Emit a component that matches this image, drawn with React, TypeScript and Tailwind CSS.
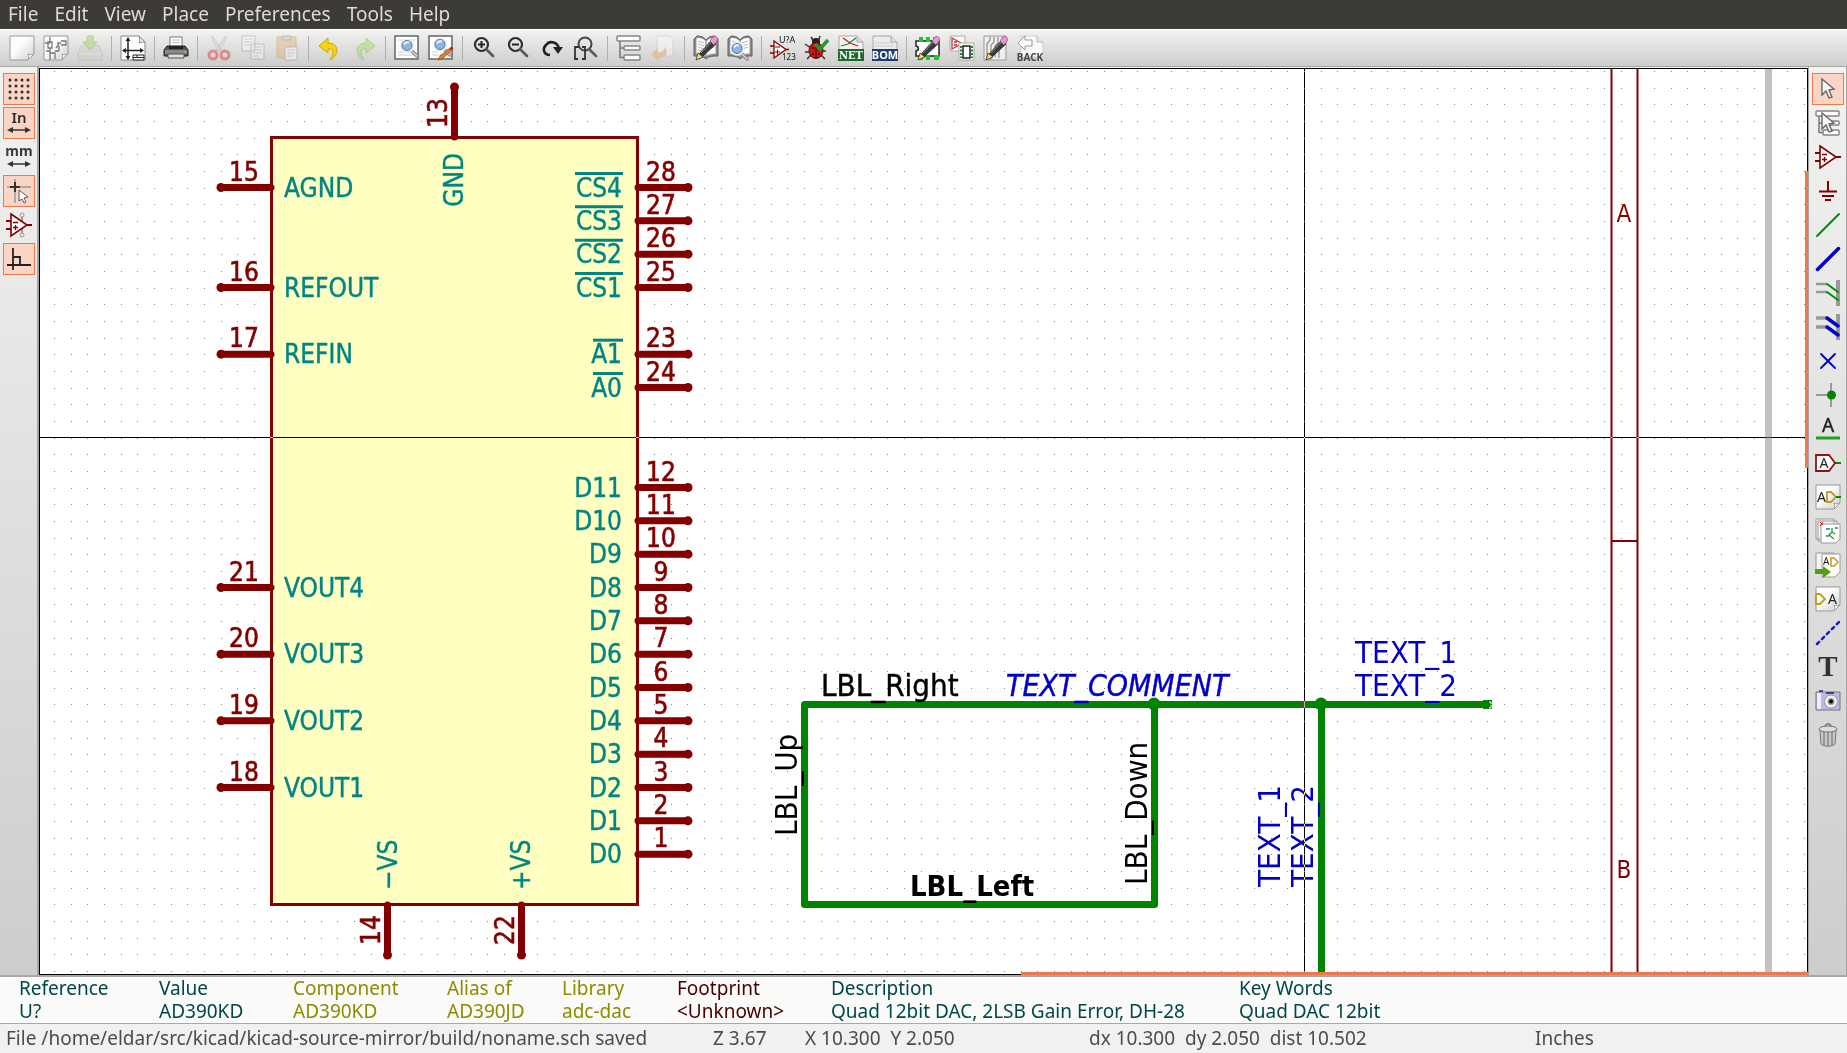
import type { ReactNode } from 'react';
import clsx from 'clsx';

type Tool = { name: string; icon: ReactNode; active?: boolean; disabled?: boolean };

const Icon = ({ children }: { children: ReactNode }) => (
  <svg viewBox="0 0 26 26" fill="none" className="size-[26px] shrink-0 overflow-visible" aria-hidden="true">
    {children}
  </svg>
);

const Page = () => (
  <>
    <path d="M1 1h24v18l-6 6H1z" fill="url(#paper)" stroke="#9a9a9a" />
    <path d="M25 19l-6 6c1-2 1-4 0-6 2 1 4 1 6 0z" fill="#fff" stroke="#9a9a9a" />
  </>
);

const Glass = ({ x = 0, y = 0 }: { x?: number; y?: number }) => (
  <g transform={`translate(${x} ${y})`}>
    <path d="M15 14l6 6" stroke="#8a8a8a" strokeWidth="3.5" strokeLinecap="round" />
    <path d="M15 14l6 6" stroke="#d0d0d0" strokeWidth="1.5" strokeLinecap="round" />
    <circle cx="11" cy="9.5" r="6" fill="#a9c6ea" stroke="#eee" strokeWidth="2.5" />
    <circle cx="11" cy="9.5" r="5" fill="#8fb4e2" stroke="#4c78b4" />
    <path d="M8 8.500a4 4 0 0 1 5-2" stroke="#e6f0fb" strokeWidth="2" />
  </g>
);

const Pencil = () => (
  <g>
    <path d="M5 24l2-6L19 5l4 4L10 21z" fill="#3a3a3a" stroke="#222" strokeWidth=".8" />
    <path d="M8 18L19 6.500" stroke="#8c8c8c" />
    <path d="M3 25l2-7 5 4z" fill="#f4dc6c" stroke="#333" strokeWidth=".8" />
    <path d="M17 6l3-4c2-2 6 1 4 4l-3 4z" fill="#e79ad0" stroke="#8d5a80" strokeWidth=".8" />
  </g>
);

const Book = () => (
  <>
    <path d="M1 4l3-3c4 0 7 1 9 4 2-3 5-4 9-4l3 3v17c-5 0-9 0-12 3-3-3-7-3-12-3z" fill="#8c8c8c" stroke="#5e5e5e" />
    <path d="M3 3c4-1 7 0 10 3v16c-3-3-6-3-10-3zM23 3c-4-1-7 0-10 3v16c3-3 6-3 10-3z" fill="#fafafa" stroke="#8a8a8a" strokeWidth=".8" />
    <path d="M5 6l6 2M5 9l6 2M5 12l6 2M5 15l6 2M21 6l-6 2M21 9l-6 2M21 12l-6 2" stroke="#bbb" />
  </>
);

const OpAmp = () => (
  <>
    <path d="M0 9h5M0 17h5M21 13h5" stroke="#840000" strokeWidth="2" />
    <path d="M5 2l16 11L5 24z" fill="#fff" stroke="#840000" strokeWidth="1.600" />
    <path d="M7 10.500h5M7 15.500h5M9.500 13v5" stroke="#840000" strokeWidth="1.400" />
  </>
);

const Sheets = () => (
  <>
    <path d="M4 6v17M4 13h4M4 22.500h4" stroke="#777" strokeWidth="1.500" />
    <rect x="1" y="1" width="23" height="5" rx="1" fill="#fff" stroke="#858585" strokeWidth="1.500" />
    <rect x="8" y="11" width="16" height="4" rx="1" fill="#fff" stroke="#858585" strokeWidth="1.500" />
    <rect x="8" y="20" width="16" height="5" rx="1" fill="#fff" stroke="#858585" strokeWidth="1.500" />
  </>
);

const Arrow = () => (
  <path d="M7 3v16l4-4 3 7 3-1-3-7 5-1z" fill="#f7f7f7" stroke="#666" strokeWidth="1.400" />
);

const Zoom = ({ children }: { children?: ReactNode }) => (
  <>
    <circle cx="10.500" cy="9.500" r="6.500" stroke="#2e2e2e" strokeWidth="2.200" />
    <path d="M15 14l7 7" stroke="#5a5a5a" strokeWidth="2.800" strokeLinecap="round" />
    {children}
  </>
);

const mainTools: Tool[][] = [
  [
    { name: 'New schematic', icon: <Page /> },
    {
      name: 'Open schematic',
      icon: (
        <>
          <Page />
          <path d="M2 8h5M7 2v5M5 7h4v6H5zM7 13v12M3 16h4M7 18h5v6M16 11v5M12 16h4M16 9l-3 4M18 6h5v4h-5M14 8h4" stroke="#777" strokeWidth="1.300" />
        </>
      ),
    },
    {
      name: 'Save',
      disabled: true,
      icon: (
        <>
          <path d="M5 10h16l4 8v7H1v-7z" fill="#ccc" stroke="#aaa" />
          <path d="M2 19h22" stroke="#eee" />
          <path d="M10 1h6v6h4l-7 8-7-8h4z" fill="#9bd04a" stroke="#6ea832" />
        </>
      ),
    },
  ],
  [
    {
      name: 'Page settings',
      icon: (
        <>
          <path d="M1 1h18l6 6v18H1z" fill="#fff" stroke="#888" />
          <path d="M19 1c1 3 1 5 0 7 2-1 4-1 6-1z" fill="#eee" stroke="#888" />
          <path d="M8 3v21M3 15.500h19" stroke="#222" strokeWidth="1.500" />
          <path d="M8 2l2.500 4h-5zM8 25l2.500-4h-5zM2 15.500l4-2.500v5zM24 15.500L20 13v5z" fill="#222" />
          <path d="M13 20h11v5H13zM13 22.500h11M17 20v3" fill="#fff" stroke="#222" />
        </>
      ),
    },
  ],
  [
    {
      name: 'Print',
      icon: (
        <>
          <path d="M7 2h12v10H7z" fill="#fff" stroke="#777" />
          <path d="M9 5h8M9 7.500h8" stroke="#bbb" />
          <path d="M4 11h18l3 4v6H1v-6z" fill="#555" stroke="#222" />
          <path d="M6 11h14v3H6z" fill="#222" />
          <path d="M2 15h22v4H2z" fill="#888" />
          <path d="M5 19h16v4H5z" fill="#ddd" stroke="#555" />
          <path d="M21 17h2" stroke="#5ddb4c" strokeWidth="1.500" />
        </>
      ),
    },
  ],
  [
    {
      name: 'Cut',
      disabled: true,
      icon: (
        <>
          <path d="M6 1c0 5 3 9 8 15l2-1zM20 1c0 5-3 9-8 15l-2-1z" fill="#ddd" stroke="#999" />
          <circle cx="7" cy="20" r="4" stroke="#e81818" strokeWidth="3" />
          <circle cx="19" cy="20" r="4" stroke="#e81818" strokeWidth="3" />
        </>
      ),
    },
    {
      name: 'Copy',
      disabled: true,
      icon: (
        <>
          <path d="M2 1h13v15H2zM11 9h13v15H11z" fill="#fff" stroke="#888" />
          <path d="M4 4h9M4 7h9M4 10h6M13 12h9M13 15h9M13 18h9M13 21h6" stroke="#aaa" />
        </>
      ),
    },
    {
      name: 'Paste',
      disabled: true,
      icon: (
        <>
          <rect x="3" y="2" width="19" height="21" rx="1" fill="#e8ac68" stroke="#b08840" />
          <path d="M8 1h9v4H8z" fill="#bbb" stroke="#777" />
          <path d="M11 12h12v13H11z" fill="#fff" stroke="#888" />
          <path d="M13 15h8M13 18h8M13 21h6" stroke="#aaa" />
        </>
      ),
    },
  ],
  [
    {
      name: 'Undo',
      icon: (
        <path d="M11 3l-9 8 9 7v-4c5-1 7 4 2 11 9-4 10-17-2-17z" fill="#f3d312" stroke="#c8a800" strokeLinejoin="round" />
      ),
    },
    {
      name: 'Redo',
      disabled: true,
      icon: (
        <path d="M15 3l9 8-9 7v-4c-5-1-7 4-2 11-9-4-10-17 2-17z" fill="#8de04e" stroke="#58b028" strokeLinejoin="round" />
      ),
    },
  ],
  [
    {
      name: 'Find',
      icon: (
        <>
          <path d="M1 1h23v23H1z" fill="#fff" stroke="#666" strokeWidth="1.500" />
          <path d="M4 5h17M4 20h17M4 17h17" stroke="#ccc" />
          <Glass x={2} y={1} />
        </>
      ),
    },
    {
      name: 'Find and replace',
      icon: (
        <>
          <path d="M1 1h23v23H1z" fill="#fff" stroke="#666" strokeWidth="1.500" />
          <path d="M4 20h10M4 17h6" stroke="#ccc" />
          <Glass x={1} />
          <path d="M10 25l2-4 10-8 2 2-10 9z" fill="#d9852a" stroke="#8a4d10" strokeWidth=".8" />
          <path d="M22 13l2-1 1 2-2 1z" fill="#c22" stroke="#c22" />
        </>
      ),
    },
  ],
  [
    { name: 'Zoom in', icon: <Zoom><path d="M7 9.500h7M10.500 6v7" stroke="#222" strokeWidth="2" /></Zoom> },
    { name: 'Zoom out', icon: <Zoom><path d="M7 9.500h7" stroke="#222" strokeWidth="2" /></Zoom> },
    {
      name: 'Redraw view',
      icon: (
        <>
          <path d="M11 20c-6 0-8-6-4-10 4-5 12-3 13 4" stroke="#222" strokeWidth="2.600" />
          <path d="M14 12h10l-5 7z" fill="#222" />
        </>
      ),
    },
    {
      name: 'Zoom to fit',
      icon: (
        <>
          <circle cx="12" cy="9" r="6.500" stroke="#444" strokeWidth="2" />
          <path d="M16 14l7 7" stroke="#5a5a5a" strokeWidth="2.600" strokeLinecap="round" />
          <path d="M5 24H2V12h4M9 24h3V12H9" stroke="#333" strokeWidth="1.800" />
        </>
      ),
    },
  ],
  [
    { name: 'Navigate hierarchy', icon: <Sheets /> },
    {
      name: 'Leave sheet',
      disabled: true,
      icon: (
        <>
          <path d="M7 1h13l3 4v16H7z" fill="#fff" stroke="#bbb" />
          <path d="M1 19l7-6v4c5 0 7-2 7-6 4 7 1 12-7 12v3z" fill="#eda050" />
        </>
      ),
    },
  ],
  [
    { name: 'Library editor', icon: <><Book /><Pencil /></> },
    { name: 'Library browser', icon: <><Book /><Glass x={-1} y={4} /></> },
  ],
  [
    {
      name: 'Annotate',
      icon: (
        <>
          <path d="M0 11h4M0 18h4M15 14.500h4" stroke="#840000" strokeWidth="1.500" />
          <path d="M4 6l12 8.500L4 23z" fill="#fff" stroke="#840000" strokeWidth="1.300" />
          <path d="M5 12h5M5 17h5M7.500 14.500v5" stroke="#840000" />
          <text x="9" y="8" fontSize="9" fill="#111">U?A</text>
          <text x="12" y="25" fontSize="8" fill="#111">123</text>
        </>
      ),
    },
    {
      name: 'Electrical rules check',
      icon: (
        <>
          <path d="M7 2l3 5M16 1l-2 6M1 9l6 4M1 17h6M3 24l5-5M22 16h-4M21 24l-5-5" stroke="#333" strokeWidth="1.500" />
          <circle cx="12" cy="7" r="4" fill="#222" />
          <ellipse cx="12" cy="15.500" rx="7" ry="8" fill="#d01414" stroke="#600" />
          <path d="M12 8v15" stroke="#400" />
          <path d="M8 12h2v2H8zM8 18h2v2H8zM14 18h2v2h-2z" fill="#111" />
          <path d="M11 9l5 5 8-9" stroke="#1a9a2c" strokeWidth="3.500" />
        </>
      ),
    },
    {
      name: 'Generate netlist',
      icon: (
        <>
          <path d="M1 1h18l6 6v18H1z" fill="#f2f2f2" stroke="#aaa" />
          <path d="M19 1v6h6" fill="#ddd" stroke="#aaa" />
          <path d="M3 11l7-2 8-6" stroke="#1d8a30" strokeWidth="1.300" />
          <path d="M5 3l7 5 8 3" stroke="#c41c1c" strokeWidth="1.300" />
          <path d="M0 14h26v12H0z" fill="#1d6a2c" />
          <text x="13" y="24" textAnchor="middle" fontSize="11" fontWeight="700" fill="#fff" className="font-['DejaVu_Serif_Condensed','DejaVu_Serif',serif]">NET</text>
        </>
      ),
    },
    {
      name: 'Bill of materials',
      icon: (
        <>
          <path d="M1 1h18l6 6v18H1z" fill="#ebebeb" stroke="#aaa" />
          <path d="M19 1v6h6" fill="#ddd" stroke="#aaa" />
          <path d="M3 8h18M3 11h18" stroke="#ccc" />
          <path d="M0 14h26v12H0z" fill="#1f3f74" />
          <text x="13" y="24" textAnchor="middle" fontSize="11" fontWeight="700" fill="#fff">BOM</text>
        </>
      ),
    },
  ],
  [
    {
      name: 'Footprint editor',
      icon: (
        <>
          <path d="M1 6h23v15H1v-5c3 0 3-5 0-5z" fill="#fff" stroke="#222" strokeWidth="1.500" />
          <path d="M4 2h4v5H4zM11 2h4v5h-4zM4 20h4v5H4zM11 20h4v5h-4zM19 20h5v5h-5zM18 2h4v5h-4z" fill="#18c82c" />
          <Pencil />
        </>
      ),
    },
    {
      name: 'Assign footprints',
      icon: (
        <>
          <path d="M1 1h15v15H1z" fill="#fafafa" stroke="#aaa" />
          <path d="M3 3l10 5.500L3 14zM5 7h3M5 10h3" stroke="#c33" strokeWidth="1.300" />
          <path d="M10 8h15v17H10z" fill="#fafafa" stroke="#aaa" />
          <path d="M14 11h7v12h-7z" stroke="#222" strokeWidth="1.500" />
          <path d="M12 11v12M23 11v12" stroke="#178a28" strokeWidth="2" strokeDasharray="2 1.500" />
        </>
      ),
    },
    {
      name: 'Board editor',
      icon: (
        <>
          <path d="M1 1h22v24H1z" fill="#eee" stroke="#999" />
          <path d="M4 25V9l3-4V2M8 25V10l3-3V2M12 22V11l3-3V2M19 2v8l-3 3v10" stroke="#999" strokeWidth="1.400" />
          <Pencil />
        </>
      ),
    },
    {
      name: 'Back-import',
      icon: (
        <>
          <path d="M4 1h16l6 6v15H4z" fill="#f8f8f8" stroke="#ccc" />
          <path d="M20 1v6h6" fill="#e5e5e5" stroke="#bbb" />
          <path d="M1 8l7-7v4h7v6H8v4z" fill="#fff" stroke="#999" />
          <text x="13" y="26" textAnchor="middle" fontSize="10" fontWeight="700" fill="#444">BACK</text>
        </>
      ),
    },
  ],
];

const optionTools: Tool[] = [
  {
    name: 'Show grid',
    active: true,
    icon: (
      <path d="M4 4h.01M10 4h.01M16 4h.01M22 4h.01M4 10h.01M10 10h.01M16 10h.01M22 10h.01M4 16h.01M10 16h.01M16 16h.01M22 16h.01M4 22h.01M10 22h.01M16 22h.01M22 22h.01" stroke="#333" strokeWidth="3" strokeLinecap="round" />
    ),
  },
  {
    name: 'Units in inches',
    active: true,
    icon: (
      <>
        <text x="13" y="13" textAnchor="middle" fontSize="15" fontWeight="600" fill="#2e2e2e">In</text>
        <path d="M4 20h18" stroke="#333" strokeWidth="1.500" />
        <path d="M1 20l6-3v6zM25 20l-6-3v6z" fill="#333" />
      </>
    ),
  },
  {
    name: 'Units in millimeters',
    icon: (
      <>
        <text x="13" y="12" textAnchor="middle" fontSize="14" fontWeight="700" fill="#3a3a3a">mm</text>
        <path d="M4 20h18" stroke="#333" strokeWidth="1.500" />
        <path d="M1 20l6-3v6zM25 20l-6-3v6z" fill="#333" />
      </>
    ),
  },
  {
    name: 'Cursor shape',
    active: true,
    icon: (
      <>
        <path d="M9 1v24M1 9h24" stroke="#999" strokeWidth="1.500" />
        <path d="M9 4v10M4 9h10" stroke="#333" strokeWidth="2" />
        <path d="M13 12v11l3-2 2 4 2-1-2-4 4-1z" fill="#fff" stroke="#555" />
      </>
    ),
  },
  {
    name: 'Show hidden pins',
    icon: (
      <>
        <path d="M16 3v20" stroke="#999" strokeWidth="2" />
        <circle cx="16" cy="3" r="2" fill="#eee" stroke="#999" />
        <circle cx="16" cy="23" r="2" fill="#eee" stroke="#999" />
        <OpAmp />
      </>
    ),
  },
  {
    name: 'Orthogonal wires only',
    active: true,
    icon: <path d="M7 2v22M1 19h24M7 11h7v8" stroke="#222" strokeWidth="1.800" />,
  },
];

const drawTools: Tool[] = [
  { name: 'Select', active: true, icon: <Arrow /> },
  { name: 'Hierarchy navigation', icon: <><Sheets /><Arrow /></> },
  { name: 'Place component', icon: <OpAmp /> },
  {
    name: 'Place power port',
    icon: <path d="M13 3v10M4 13.500h18M7 18h12M10 22h6" stroke="#840000" strokeWidth="2" />,
  },
  {
    name: 'Place wire',
    icon: <path d="M2 24L24 2" stroke="#008c00" strokeWidth="2" strokeLinecap="round" />,
  },
  {
    name: 'Place bus',
    icon: <path d="M2.500 23.500l21-21" stroke="#0000c8" strokeWidth="3.500" strokeLinecap="round" />,
  },
  {
    name: 'Wire to bus entry',
    icon: (
      <>
        <path d="M1 4h11M1 12h11" stroke="#999" strokeWidth="2.500" />
        <path d="M23 0v26" stroke="#999" strokeWidth="4" />
        <path d="M12 4l11 8M12 12l11 8" stroke="#008c00" strokeWidth="2" strokeLinecap="round" />
      </>
    ),
  },
  {
    name: 'Bus to bus entry',
    icon: (
      <>
        <path d="M1 4h11M1 13h11" stroke="#999" strokeWidth="3.500" />
        <path d="M23 0v26" stroke="#999" strokeWidth="4" />
        <path d="M12 4l11 8M12 13l11 8" stroke="#0000c8" strokeWidth="3.500" strokeLinecap="round" />
      </>
    ),
  },
  {
    name: 'No connect flag',
    icon: <path d="M6 6l14 14M20 6L6 20" stroke="#0000c8" strokeWidth="1.800" strokeLinecap="round" />,
  },
  {
    name: 'Place junction',
    icon: (
      <>
        <path d="M1 13h15M16 1v24" stroke="#999" strokeWidth="2" />
        <circle cx="16.500" cy="13" r="4.500" fill="#008400" />
      </>
    ),
  },
  {
    name: 'Place net name',
    icon: (
      <>
        <text x="13" y="16" textAnchor="middle" fontSize="19" fill="#222" stroke="#222" strokeWidth=".4">A</text>
        <path d="M1 22h24" stroke="#22a022" strokeWidth="3" />
      </>
    ),
  },
  {
    name: 'Place global label',
    icon: (
      <>
        <path d="M20 13h6" stroke="#008c00" strokeWidth="2" />
        <path d="M1 5h13l6 8-6 8H1z" fill="#fff" stroke="#9a1010" strokeWidth="1.800" />
        <text x="9" y="18" textAnchor="middle" fontSize="14" fill="#222">A</text>
      </>
    ),
  },
  {
    name: 'Place hierarchical label',
    icon: (
      <>
        <Page />
        <text x="2" y="18" fontSize="14" fill="#222">A</text>
        <path d="M12 8h4l5 5-5 5h-4z" stroke="#c69a1a" strokeWidth="1.800" />
        <path d="M21 13h5" stroke="#008c00" strokeWidth="2" />
      </>
    ),
  },
  {
    name: 'Place hierarchical sheet',
    icon: (
      <>
        <path d="M1 1h18v20H1zM3 3h19v20H3z" fill="#f4f4f4" stroke="#999" />
        <path d="M6 6h19v15l-4 4H6z" fill="#fff" stroke="#999" />
        <path d="M5 4l3 3M5 8l3-4" stroke="#b22" />
        <path d="M11 11h4M11 18h3M20 10h3" stroke="#27a" strokeWidth="1.300" />
        <path d="M17 10v4l-3 3 5 4M17 14l3 2" stroke="#2a9a2a" strokeWidth="1.300" />
      </>
    ),
  },
  {
    name: 'Import hierarchical label',
    icon: (
      <>
        <path d="M1 1h18v20H1z" fill="#f4f4f4" stroke="#999" />
        <path d="M7 2h18v18l-5 5H7z" fill="#fff" stroke="#999" />
        <text x="8" y="13" fontSize="10" fill="#222">A</text>
        <path d="M16 6h3l4 4-4 4h-3z" stroke="#c69a1a" strokeWidth="1.500" />
        <path d="M0 17h8v-3l8 6-8 6v-4H0z" fill="#4ea010" />
      </>
    ),
  },
  {
    name: 'Place sheet pin',
    icon: (
      <>
        <Page />
        <path d="M1 8h4l5 5-5 5H1z" stroke="#c69a1a" strokeWidth="1.800" />
        <text x="13" y="18" fontSize="14" fill="#222">A</text>
      </>
    ),
  },
  {
    name: 'Place graphic line',
    icon: <path d="M2 24L24 2" stroke="#1a1ad0" strokeWidth="2.500" strokeLinecap="round" strokeDasharray="3 4" />,
  },
  {
    name: 'Place text',
    icon: (
      <text x="13" y="22" textAnchor="middle" fontSize="29" fontWeight="700" fill="#333" className="font-['Liberation_Serif',serif]">T</text>
    ),
  },
  {
    name: 'Place image',
    icon: (
      <>
        <path d="M1 4h24v18H1z" fill="#b9b9e6" stroke="#777" />
        <path d="M2 5h4v16H2z" fill="#eef" />
        <path d="M11 5h8M4 3h4" stroke="#226" strokeWidth="1.500" />
        <circle cx="16" cy="13.500" r="6.500" fill="#f4f4f4" stroke="#999" />
        <circle cx="16" cy="13.500" r="3.500" fill="#999" />
        <circle cx="16" cy="13.500" r="2" fill="#000" />
      </>
    ),
  },
  {
    name: 'Delete',
    icon: (
      <>
        <path d="M5 8l1 14c3 3 11 3 14 0l1-14z" fill="#c8c8c8" stroke="#777" />
        <path d="M9 10v13M13 10v14M17 10v13" stroke="#888" strokeWidth="1.500" />
        <ellipse cx="13" cy="7" rx="9" ry="3" fill="#ddd" stroke="#777" />
        <path d="M10 5c0-4 6-4 6 0" stroke="#777" strokeWidth="1.300" />
      </>
    ),
  },
];

const ToolButton = ({ tool, className }: { tool: Tool; className: string }) => (
  <button
    type="button"
    aria-label={tool.name}
    disabled={tool.disabled}
    className={clsx(
      'flex shrink-0 items-center justify-center',
      className,
      tool.active && 'border border-[#f0784a] bg-[#fad5c6]',
      tool.disabled && 'opacity-40',
    )}
  >
    <Icon>{tool.icon}</Icon>
  </button>
);

const SideBar = ({ label, tools, className }: { label: string; tools: Tool[]; className?: string }) => (
  <div
    role="toolbar"
    aria-label={label}
    className={clsx(
      'flex w-[39px] shrink-0 flex-col items-center gap-0.5 border-[#a4a4a4] bg-linear-to-b from-[#f2f2f0] to-[#cdcdcb] pt-1.5',
      className,
    )}
  >
    {tools.map((tool) => (
      <ToolButton key={tool.name} tool={tool} className="size-8" />
    ))}
  </div>
);

/* Schematic geometry: pins sit on a grid of 50/3 px */
const row = (n: number) => 187.5 + (n * 50) / 3;

const leftPins = [
  { num: '15', name: 'AGND', at: 0 },
  { num: '16', name: 'REFOUT', at: 6 },
  { num: '17', name: 'REFIN', at: 10 },
  { num: '21', name: 'VOUT4', at: 24 },
  { num: '20', name: 'VOUT3', at: 28 },
  { num: '19', name: 'VOUT2', at: 32 },
  { num: '18', name: 'VOUT1', at: 36 },
];

const rightPins = [
  { num: '28', name: 'CS4', at: 0, bar: 575 },
  { num: '27', name: 'CS3', at: 2, bar: 575 },
  { num: '26', name: 'CS2', at: 4, bar: 575 },
  { num: '25', name: 'CS1', at: 6, bar: 575 },
  { num: '23', name: 'A1', at: 10, bar: 593 },
  { num: '24', name: 'A0', at: 12, bar: 593 },
  { num: '12', name: 'D11', at: 18 },
  { num: '11', name: 'D10', at: 20 },
  { num: '10', name: 'D9', at: 22 },
  { num: '9', name: 'D8', at: 24 },
  { num: '8', name: 'D7', at: 26 },
  { num: '7', name: 'D6', at: 28 },
  { num: '6', name: 'D5', at: 30 },
  { num: '5', name: 'D4', at: 32 },
  { num: '4', name: 'D3', at: 34 },
  { num: '3', name: 'D2', at: 36 },
  { num: '2', name: 'D1', at: 38 },
  { num: '1', name: 'D0', at: 40 },
];

const Pin = ({ x1, y1, x2, y2 }: { x1: number; y1: number; x2: number; y2: number }) => (
  <>
    <line x1={x1} y1={y1} x2={x2} y2={y2} stroke="#840000" strokeWidth="7" strokeLinecap="round" />
    <circle cx={x2} cy={y2} r="4.500" fill="#840000" />
  </>
);

const Upright = ({ x, y, anchor, children }: { x: number; y: number; anchor?: 'middle' | 'end'; children: string }) => (
  <text transform={`translate(${x} ${y}) rotate(-90)`} textAnchor={anchor}>
    {children}
  </text>
);

const Schematic = () => (
  <svg className="block h-full w-full font-['DejaVu_Sans_Condensed','DejaVu_Sans',sans-serif]" role="img" aria-label="Schematic sheet">
    <defs>
      <pattern id="grid" width="50" height="50" x="4" y="21" patternUnits="userSpaceOnUse">
        <path d="M0 0h1v1H0zM17 0h1v1h-1zM33 0h1v1h-1zM0 17h1v1H0zM17 17h1v1h-1zM33 17h1v1h-1zM0 33h1v1H0zM17 33h1v1h-1zM33 33h1v1h-1z" fill="#848484" />
      </pattern>
    </defs>
    <rect width="100%" height="100%" fill="#fff" />
    <g transform="translate(-40 -69)">
      <rect x="40" y="70" width="100%" height="100%" fill="url(#grid)" />

      {/* Sheet border */}
      <path d="M1611.500 60v920M1637.500 60v920M1611 541h26" stroke="#840000" strokeWidth="2" />
      <path d="M1768.500 60v920" stroke="#c2c2c2" strokeWidth="7" />
      <g fontSize="24" fill="#840000" textAnchor="middle">
        <text x="1624" y="222">A</text>
        <text x="1624" y="878">B</text>
      </g>

      {/* DAC body and pins */}
      <rect x="271.500" y="137.500" width="366" height="767" fill="#ffffc2" stroke="#840000" strokeWidth="3" />
      {leftPins.map((pin) => (
        <Pin key={pin.num} x1={271} y1={row(pin.at)} x2={221} y2={row(pin.at)} />
      ))}
      {rightPins.map((pin) => (
        <Pin key={pin.num} x1={638} y1={row(pin.at)} x2={688} y2={row(pin.at)} />
      ))}
      <Pin x1={454.5} y1={137} x2={454.5} y2={87} />
      <Pin x1={387.5} y1={905} x2={387.5} y2={955} />
      <Pin x1={521.5} y1={905} x2={521.5} y2={955} />

      <g fontSize="26" fill="#840000" stroke="#840000" strokeWidth=".6" textAnchor="middle">
        {leftPins.map((pin) => (
          <text key={pin.num} x="244" y={row(pin.at) - 7}>{pin.num}</text>
        ))}
        {rightPins.map((pin) => (
          <text key={pin.num} x="661" y={row(pin.at) - 7}>{pin.num}</text>
        ))}
        <Upright x={447} y={113}>13</Upright>
        <Upright x={380} y={930}>14</Upright>
        <Upright x={514} y={930}>22</Upright>
      </g>

      <g fontSize="26" fill="#008484" stroke="#008484" strokeWidth=".4">
        {leftPins.map((pin) => (
          <text key={pin.name} x="284" y={row(pin.at) + 9}>{pin.name}</text>
        ))}
        {rightPins.map((pin) => (
          <g key={pin.name}>
            <text x="622" y={row(pin.at) + 9} textAnchor="end">{pin.name}</text>
            {pin.bar && <path d={`M${pin.bar} ${row(pin.at) - 14}H623`} strokeWidth="3" />}
          </g>
        ))}
        <Upright x={463} y={153} anchor="end">GND</Upright>
        <Upright x={397} y={890}>−VS</Upright>
        <Upright x={530} y={890}>+VS</Upright>
      </g>

      {/* Wires */}
      <path d="M1487 704.500H804.500v200h350v-200M1321.500 704.500V1400" stroke="#008400" strokeWidth="7" strokeLinejoin="round" fill="none" />
      <circle cx="1154" cy="704" r="6.500" fill="#008400" />
      <circle cx="1321" cy="704" r="6.500" fill="#008400" />
      <path d="M1483 700h9v9h-9z" fill="#008400" />
      <path d="M1489 702h2v2M1491 705v3h-2" stroke="#fff" fill="none" />

      {/* Labels and comments */}
      <g fontSize="31" fill="#000">
        <text x="821" y="696" stroke="#000" strokeWidth=".4">LBL_Right</text>
        <text x="910" y="896" fontSize="29" fontWeight="700">LBL_Left</text>
        <Upright x={797} y={836}>LBL_Up</Upright>
        <Upright x={1147} y={885}>LBL_Down</Upright>
      </g>
      <g fontSize="31" fill="#0000c8">
        <text x="1006" y="696" fontSize="30" fontStyle="italic" stroke="#0000c8" strokeWidth=".4">TEXT_COMMENT</text>
        <text x="1355" y="663">TEXT_1</text>
        <text x="1355" y="696">TEXT_2</text>
        <Upright x={1280} y={887}>TEXT_1</Upright>
        <Upright x={1313} y={887}>TEXT_2</Upright>
      </g>

      {/* Full-window crosshair, inverted over whatever it crosses */}
      <rect x="1304" y="0" width="1" height="200%" fill="#fff" shapeRendering="crispEdges" className="mix-blend-difference" />
      <rect x="0" y="437" width="200%" height="1" fill="#fff" shapeRendering="crispEdges" className="mix-blend-difference" />
    </g>
  </svg>
);

const fields = [
  { label: 'Reference', value: 'U?', style: 'w-[140px] text-[#004848]' },
  { label: 'Value', value: 'AD390KD', style: 'w-[134px] text-[#004848]' },
  { label: 'Component', value: 'AD390KD', style: 'w-[154px] text-[#8c8c00]' },
  { label: 'Alias of', value: 'AD390JD', style: 'w-[115px] text-[#8c8c00]' },
  { label: 'Library', value: 'adc-dac', style: 'w-[115px] text-[#8c8c00]' },
  { label: 'Footprint', value: '<Unknown>', style: 'w-[154px] text-[#480000]' },
  { label: 'Description', value: 'Quad 12bit DAC, 2LSB Gain Error, DH-28', style: 'w-[408px] text-[#004848]' },
  { label: 'Key Words', value: 'Quad DAC 12bit', style: 'text-[#004848]' },
];

const menus = ['File', 'Edit', 'View', 'Place', 'Preferences', 'Tools', 'Help'];

const App = () => {
  return (
    <div className="flex h-screen flex-col overflow-hidden bg-[#f2f1f0] font-['Noto_Sans',sans-serif] text-[19px]">
      <svg className="absolute size-0" aria-hidden="true">
        <linearGradient id="paper" x1="0" y1="0" x2="1" y2="1">
          <stop offset="0.4" stopColor="#fdfdfd" />
          <stop offset="1" stopColor="#cfcfcf" />
        </linearGradient>
      </svg>

      <nav className="flex h-[29px] shrink-0 items-center gap-4 bg-[#3c3b37] px-2 text-[#dfdbd2]">
        {menus.map((menu) => (
          <button key={menu} type="button">{menu}</button>
        ))}
      </nav>

      <div
        role="toolbar"
        aria-label="Main"
        className="flex h-[38px] shrink-0 items-center border-t border-b border-t-white border-b-[#a4a4a4] bg-linear-to-b from-[#f2f2f0] to-[#cdcdcb] pl-[5px]"
      >
        {mainTools.map((group, index) => (
          <div key={group[0].name} className="flex items-center">
            {index > 0 && <span className="mx-1 h-[25px] w-px bg-[#b0b0ae]" />}
            {group.map((tool) => (
              <ToolButton key={tool.name} tool={tool} className="h-8 w-[34px]" />
            ))}
          </div>
        ))}
      </div>

      <div className="flex min-h-0 flex-1">
        <SideBar label="Options" tools={optionTools} className="border-r-2" />
        <main className="relative mt-px min-w-0 flex-1 border border-black bg-white">
          <Schematic />
          {/* Scroll thumbs */}
          <div className="absolute top-[102px] -right-px h-[297px] w-[3px] bg-[#f07746]" />
          <div className="absolute -right-px -bottom-px left-[981px] h-[3px] bg-[#f07746]" />
        </main>
        <SideBar label="Drawing" tools={drawTools} className="border-x" />
      </div>

      <dl className="flex shrink-0 border-t-2 border-b border-[#a9a9a9] bg-[#fafaf8] pl-[19px] leading-[23px] whitespace-nowrap">
        {fields.map((field) => (
          <div key={field.label} className={clsx('shrink-0', field.style)}>
            <dt>{field.label}</dt>
            <dd>{field.value}</dd>
          </div>
        ))}
      </dl>

      <footer className="flex h-[29px] shrink-0 items-center pl-1.5 whitespace-pre text-[#4c4c4c]">
        <span className="w-[707px] shrink-0">File /home/eldar/src/kicad/kicad-source-mirror/build/noname.sch saved</span>
        <span className="w-[92px] shrink-0">Z 3.67</span>
        <span className="w-[284px] shrink-0">X 10.300  Y 2.050</span>
        <span className="w-[446px] shrink-0">dx 10.300  dy 2.050  dist 10.502</span>
        <span>Inches</span>
      </footer>
    </div>
  );
};

export default App;
